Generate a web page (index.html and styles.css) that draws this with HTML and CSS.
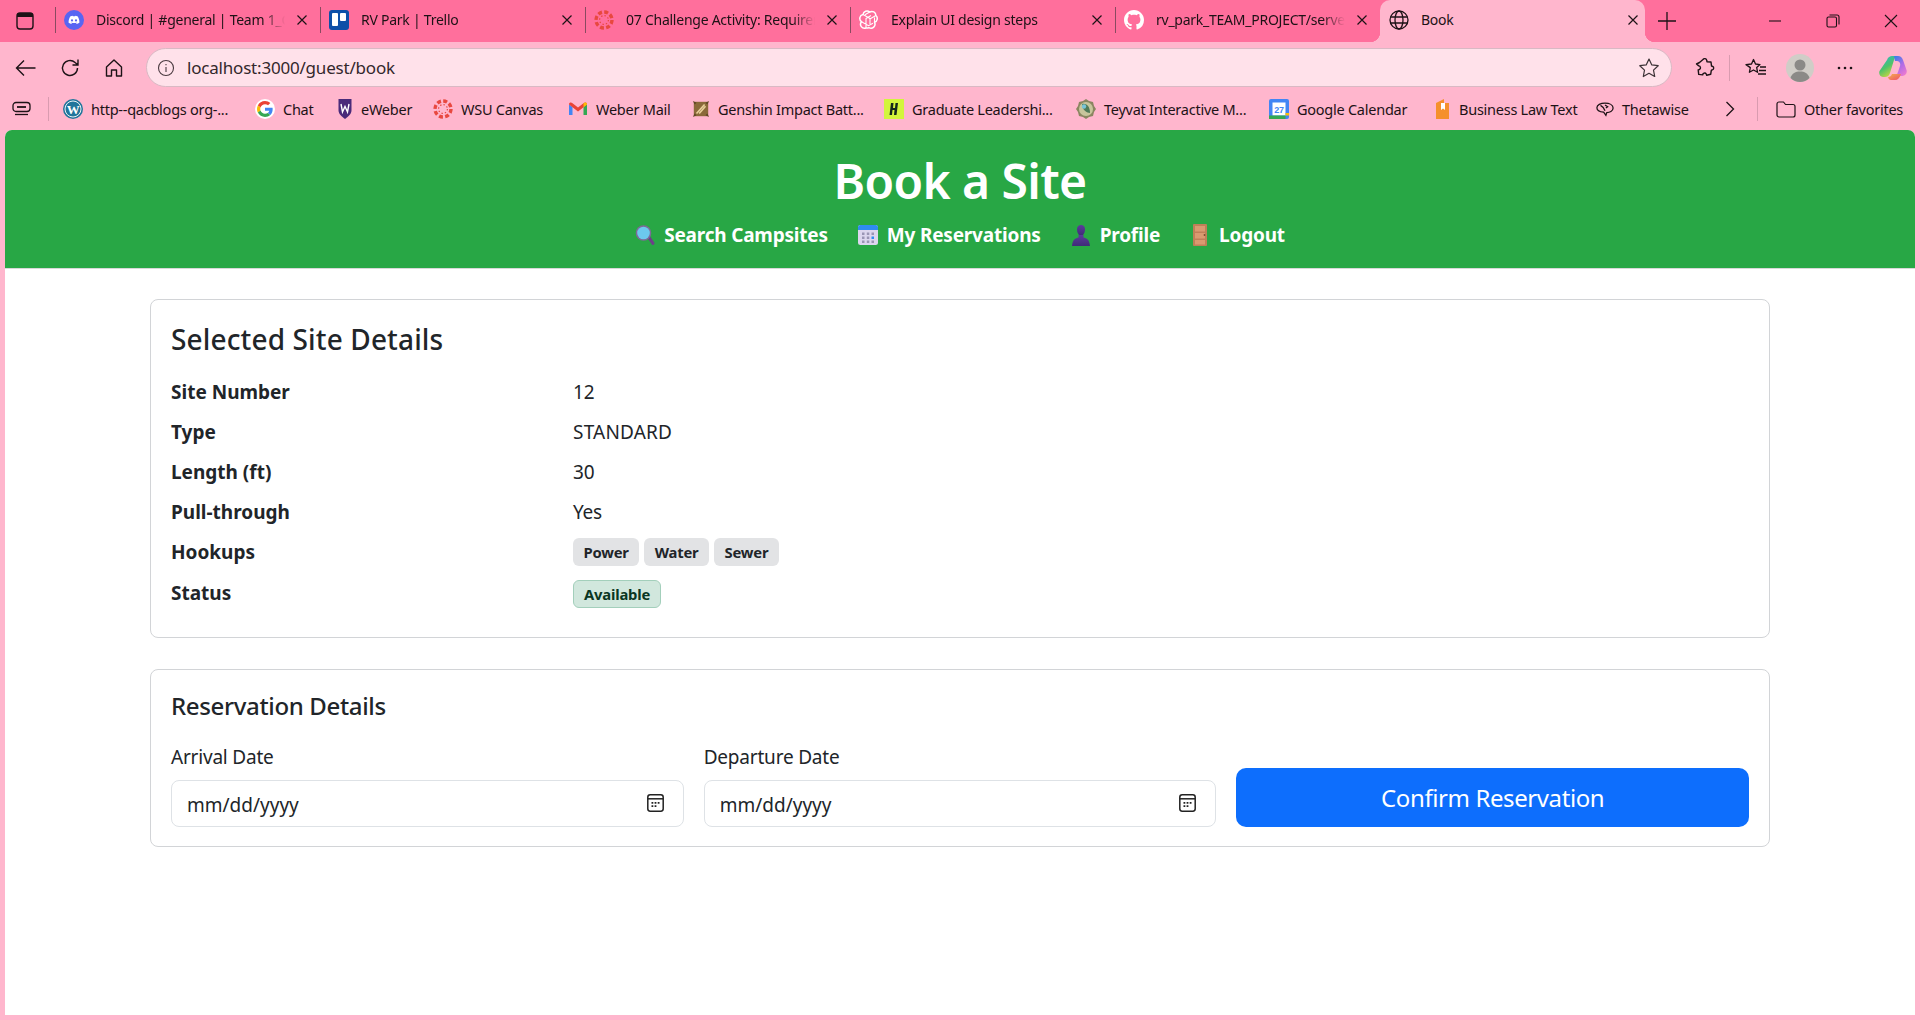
FILE: index.html
```html
<!DOCTYPE html>
<html lang="en">
<head>
<title>Book</title>
<link rel="stylesheet" href="styles.css">
</head>
<body>
<svg class="defs" width="0" height="0">
    <defs>
        <linearGradient id="cp-blue" x1="0" y1="0" x2="0.6" y2="1"><stop offset="0" stop-color="#27b5d8"/><stop offset="0.55" stop-color="#4fc26a"/><stop offset="1" stop-color="#d6d83a"/></linearGradient>
        <linearGradient id="cp-pink" x1="0.2" y1="0" x2="0.8" y2="1"><stop offset="0" stop-color="#3d7fe8"/><stop offset="0.5" stop-color="#b06ae6"/><stop offset="1" stop-color="#ee7ad0"/></linearGradient>
        <linearGradient id="cp-red" x1="0" y1="0" x2="1" y2="1"><stop offset="0" stop-color="#f4b04a"/><stop offset="1" stop-color="#ef4f6a"/></linearGradient>
        <linearGradient id="person" x1="0" y1="0" x2="0" y2="1"><stop offset="0" stop-color="#5c3a9c"/><stop offset="1" stop-color="#3f2c78"/></linearGradient>
    </defs>
    <symbol id="close" viewBox="0 0 12 12"><path d="M1.500 1.500l9 9M10.500 1.500l-9 9" stroke="#1d1216" stroke-width="1.200" fill="none"/></symbol>
    <symbol id="canvas" viewBox="0 0 20 20">
        <circle cx="10" cy="10" r="8" fill="none" stroke="#e8483f" stroke-width="3.400" stroke-dasharray="4 2.280"/>
        <circle cx="10" cy="10" r="4.400" fill="none" stroke="#e8483f" stroke-width="1.200" stroke-dasharray="1.400 2.050"/>
    </symbol>
    <symbol id="date" viewBox="0 0 17 18">
        <rect x="0.800" y="0.800" width="15.400" height="16.400" rx="2.400" fill="none" stroke="#222" stroke-width="1.500"/>
        <path d="M0.800 4.800h15.400" stroke="#222" stroke-width="1.500"/>
        <path d="M4.500 8h1.800v1.800H4.500zM7.600 8h1.800v1.800H7.600zM10.700 8h1.800v1.800h-1.800zM4.500 11.300h1.800v1.800H4.500zM7.600 11.300h1.800v1.800H7.600z" fill="#222"/>
    </symbol>
</svg>

<div class="tabstrip">
    <div class="tabstrip-side">
        <svg width="18" height="18" viewBox="0 0 18 18"><rect x="1" y="1" width="16" height="16" rx="3" fill="none" stroke="#1d1216" stroke-width="1.400"/><path d="M1 2.500a1.500 1.500 0 011.500-1.500h13a1.500 1.500 0 011.500 1.500V5H1z" fill="#1d1216"/></svg>
    </div>
    <div class="tab">
        <span class="tab-sep"></span>
        <svg class="tab-icon" viewBox="0 0 20 20"><circle cx="10" cy="10" r="10" fill="#5865f2"/><path d="M6.200 6.500c1-.5 1.900-.7 2.400-.8l.3.6h2.200l.3-.6c.5.100 1.400.3 2.400.8 1.100 1.900 1.700 3.900 1.600 6.300-1 .7-1.900 1.100-2.700 1.300l-.6-1 1-.5-.3-.2c-1.800.8-3.800.8-5.600 0l-.3.200 1 .5-.6 1c-.8-.2-1.700-.6-2.700-1.300-.1-2.400.5-4.400 1.600-6.300z" fill="#fff"/><circle cx="8" cy="10.400" r="1.100" fill="#5865f2"/><circle cx="12" cy="10.400" r="1.100" fill="#5865f2"/></svg>
        <span class="tab-title">Discord | #general | Team 1_Cascade</span>
        <svg class="tab-close"><use href="#close"/></svg>
    </div>
    <div class="tab">
        <span class="tab-sep"></span>
        <svg class="tab-icon" viewBox="0 0 20 20"><rect width="20" height="20" rx="3" fill="#0c4fa8"/><rect x="3" y="3" width="6" height="13" rx="1" fill="#fff"/><rect x="11" y="3" width="6" height="8" rx="1" fill="#fff"/></svg>
        <span class="tab-title">RV Park | Trello</span>
        <svg class="tab-close"><use href="#close"/></svg>
    </div>
    <div class="tab">
        <span class="tab-sep"></span>
        <svg class="tab-icon"><use href="#canvas"/></svg>
        <span class="tab-title">07 Challenge Activity: Requirements</span>
        <svg class="tab-close"><use href="#close"/></svg>
    </div>
    <div class="tab">
        <span class="tab-sep"></span>
        <svg class="tab-icon" viewBox="0 0 20 20" fill="none" stroke="#fff" stroke-width="1.500"><path d="M7 18a4 4 0 01-4.500-6.300A4 4 0 014 4.500a4 4 0 016.700-2.400 4 4 0 016.200 3.400 4 4 0 01-1.400 6.800 4 4 0 01-5.600 5.300A4 4 0 017 18z" stroke-linejoin="round"/><path d="M7 18V8.500l5-3M2.500 11.700l7 4 4.500-2.500M4 4.500l7 4v5.500M16.900 5.500l-6.500 3.800M15.500 12.300V7.500M10.700 2.100L6 4.800" stroke-width="1.100"/></svg>
        <span class="tab-title">Explain UI design steps</span>
        <svg class="tab-close"><use href="#close"/></svg>
    </div>
    <div class="tab">
        <span class="tab-sep"></span>
        <svg class="tab-icon" viewBox="0 0 16 16"><path fill="#fff" d="M8 0C3.58 0 0 3.58 0 8c0 3.54 2.290 6.530 5.470 7.590.4.070.55-.17.55-.38 0-.19-.01-.82-.01-1.490-2.010.37-2.530-.49-2.690-.94-.09-.23-.48-.94-.82-1.130-.28-.15-.68-.52-.01-.53.63-.01 1.080.58 1.230.82.72 1.210 1.870.87 2.330.66.07-.52.28-.87.51-1.070-1.780-.2-3.640-.89-3.640-3.950 0-.87.31-1.590.82-2.150-.08-.2-.36-1.020.08-2.120 0 0 .67-.21 2.200.82.64-.18 1.320-.27 2-.27s1.360.09 2 .27c1.530-1.040 2.200-.82 2.200-.82.44 1.100.16 1.920.08 2.120.51.56.82 1.270.82 2.150 0 3.070-1.870 3.750-3.650 3.950.29.25.54.73.54 1.480 0 1.070-.01 1.930-.01 2.200 0 .21.15.46.55.38A8.013 8.013 0 0016 8c0-4.420-3.580-8-8-8z"/></svg>
        <span class="tab-title">rv_park_TEAM_PROJECT/server</span>
        <svg class="tab-close"><use href="#close"/></svg>
    </div>
    <div class="tab tab-active">
        <svg class="tab-icon" viewBox="0 0 20 20" fill="none" stroke="#1d1216" stroke-width="1.300"><circle cx="10" cy="10" r="9"/><ellipse cx="10" cy="10" rx="4" ry="9"/><path d="M1.600 7h16.800M1.600 13h16.800"/></svg>
        <span class="tab-title">Book</span>
        <svg class="tab-close"><use href="#close"/></svg>
    </div>
    <div class="tab-new">
        <svg width="18" height="18" viewBox="0 0 18 18"><path d="M9 0v18M0 9h18" stroke="#1d1216" stroke-width="1.300"/></svg>
    </div>
    <div class="window-btns">
        <svg width="14" height="14" viewBox="0 0 14 14"><path d="M1 7h12" stroke="#1d1216" stroke-width="1.100"/></svg>
        <svg width="14" height="14" viewBox="0 0 14 14" fill="none" stroke="#1d1216" stroke-width="1.100"><rect x="1" y="3" width="9.500" height="10" rx="1.500"/><path d="M3.500 1h7.500a2 2 0 012 2v7.500"/></svg>
        <svg width="14" height="14" viewBox="0 0 14 14"><path d="M1 1l12 12M13 1L1 13" stroke="#1d1216" stroke-width="1.100"/></svg>
    </div>
</div>

<div class="toolbar">
    <div class="nav-btns">
        <svg width="21" height="20" viewBox="0 0 21 20" fill="none" stroke="#1d1216" stroke-width="1.400"><path d="M20.500 10H1.500M9 2.500L1.500 10 9 17.500"/></svg>
        <svg width="20" height="20" viewBox="0 0 20 20" fill="none" stroke="#1d1216" stroke-width="1.400"><path d="M17.500 10a7.500 7.500 0 11-2.400-5.500L18 7M18 1.500V7h-5.500"/></svg>
        <svg width="20" height="20" viewBox="0 0 20 20" fill="none" stroke="#1d1216" stroke-width="1.400"><path d="M2.500 9L10 2l7.500 7v9h-5v-6h-5v6h-5z" stroke-linejoin="round"/></svg>
    </div>
    <div class="address">
        <svg width="18" height="18" viewBox="0 0 18 18" fill="none" stroke="#4a3a40" stroke-width="1.100"><circle cx="9" cy="9" r="7.500"/><path d="M9 8v5M9 5v1.300"/></svg>
        <span class="address-url">localhost:3000/guest/book</span>
        <svg class="address-star" width="22" height="22" viewBox="0 0 22 22" fill="none" stroke="#3c3236" stroke-width="1.200"><path d="M11 2l2.800 5.900 6.400.8-4.700 4.400 1.200 6.400L11 16.300 5.300 19.500l1.200-6.400L1.800 8.700l6.400-.8z" stroke-linejoin="round"/></svg>
    </div>
    <div class="tool-btns">
        <svg class="tool-ext" width="20" height="22" viewBox="0 0 20 22" fill="none" stroke="#1d1216" stroke-width="1.400"><path d="M8 2.500c1-1.500 3.500-1 3.800 1 .1.5 0 1 .2 1.200l4 .3.5 4c.2.3.8.2 1.200.4 1.500.8 1.200 3-.4 3.500-.4.100-.8.100-1 .4l-.6 4-4 1c-.3-.4-.2-1-.5-1.400-1-1.500-3.500-.8-3.500 1l-4-.5-.5-4.500c.4-.3 1-.2 1.400-.5 1.500-1 1-3.300-.8-3.500L1.500 7l3-1.500z" stroke-linejoin="round"/></svg>
        <span class="tool-sep"></span>
        <svg class="tool-fav" width="22" height="22" viewBox="0 0 22 22" fill="none" stroke="#1d1216" stroke-width="1.300"><path d="M8.500 2.500l2 4.500 4.500.6-3.300 3 .9 4.700-4.100-2.300-4.100 2.300.9-4.700L1 7.600l5.500-.6z" stroke-linejoin="round"/><path d="M15 10h6M14 13.500h7M13 17h8"/></svg>
        <svg class="tool-avatar" width="28" height="28" viewBox="0 0 28 28"><circle cx="14" cy="14" r="14" fill="#d0cdc7"/><circle cx="14" cy="11" r="5.500" fill="#8b8a87"/><path d="M4.500 24c1.500-5 5-6.500 9.500-6.500s8 1.500 9.500 6.500c-2.500 2.500-6 4-9.500 4s-7-1.500-9.500-4z" fill="#8b8a87"/></svg>
        <svg class="tool-more" width="16" height="4" viewBox="0 0 16 4" fill="#1d1216"><circle cx="2" cy="2" r="1.300"/><circle cx="8" cy="2" r="1.300"/><circle cx="14" cy="2" r="1.300"/></svg>
        <svg class="tool-copilot" width="28" height="26" viewBox="0 0 28 26">
            <path d="M8 5c1-3 3-4 5-4h6c-2 0-3 1-4 4l-4 13c-1 3-3 4-5 4H4c-3 0-4.500-3-3.500-6z" fill="url(#cp-blue)"/>
            <path d="M15 1h4c2.500 0 4 1.500 5 4l3.500 10c1 3-1 6-4 6h-9c2 0 3.500-1 4.500-4l2-6c1-3-1-5-3-5h-2z" fill="url(#cp-pink)"/>
            <path d="M9 22c2 0 3.500-1 4-3h9c-1.500 4-3 6-6 6h-4c-1.500 0-2.500-1-3-3z" fill="url(#cp-red)"/>
        </svg>
    </div>
</div>

<div class="favbar">
    <svg class="fav-tabs" width="20" height="18" viewBox="0 0 20 18" fill="none" stroke="#1d1216" stroke-width="1.300"><rect x="1" y="2.500" width="17" height="9" rx="3"/><path d="M5 7h9" stroke-width="1.800"/><path d="M3 14.500h13"/></svg>
    <span class="fav-sep"></span>
    <div class="fav-list">
        <div class="fav fav-wp">
            <svg class="fav-icon" viewBox="0 0 20 20"><circle cx="10" cy="10" r="10" fill="#21759b"/><circle cx="10" cy="10" r="8" fill="none" stroke="#fff" stroke-width="0.900"/><text x="10" y="14.500" class="fav-wp-w">W</text></svg>
            <span>http--qacblogs org-...</span>
        </div>
        <div class="fav fav-chat">
            <svg class="fav-icon" viewBox="-6 -6 60 60"><circle cx="24" cy="24" r="30" fill="#fff"/><path fill="#EA4335" d="M24 9.500c3.540 0 6.710 1.220 9.210 3.600l6.850-6.850C35.900 2.380 30.470 0 24 0 14.620 0 6.510 5.380 2.560 13.220l7.980 6.190C12.430 13.720 17.740 9.500 24 9.500z"/><path fill="#4285F4" d="M46.980 24.550c0-1.570-.15-3.090-.38-4.550H24v9.020h12.940c-.58 2.960-2.260 5.480-4.780 7.180l7.730 6c4.510-4.180 7.090-10.360 7.090-17.650z"/><path fill="#FBBC05" d="M10.530 28.590c-.48-1.450-.76-2.990-.76-4.590s.27-3.140.76-4.590l-7.980-6.190C.92 16.460 0 20.120 0 24c0 3.880.92 7.540 2.560 10.780l7.970-6.190z"/><path fill="#34A853" d="M24 48c6.480 0 11.930-2.130 15.890-5.810l-7.730-6c-2.150 1.450-4.920 2.300-8.160 2.300-6.260 0-11.570-4.220-13.470-9.910l-7.980 6.190C6.510 42.620 14.620 48 24 48z"/></svg>
            <span>Chat</span>
        </div>
        <div class="fav fav-weber">
            <svg class="fav-icon" viewBox="3 0 14 20"><path d="M3.500 0h13v11c0 4-3 6.500-6.500 9-3.500-2.500-6.500-5-6.500-9z" fill="#4a2a7a"/><path d="M6 5l1.500 8L10 7.500 12.500 13 14 5" fill="none" stroke="#fff" stroke-width="1.400"/></svg>
            <span>eWeber</span>
        </div>
        <div class="fav fav-wsu">
            <svg class="fav-icon"><use href="#canvas"/></svg>
            <span>WSU Canvas</span>
        </div>
        <div class="fav fav-mail">
            <svg class="fav-icon" viewBox="0 0 20 20"><path d="M1 5.500V16h3.500V8z" fill="#4285f4"/><path d="M15.500 8v8H19V5.500z" fill="#34a853"/><path d="M1 5.500C1 3.500 3 3 4.500 4.200L10 8.500l5.500-4.300C17 3 19 3.500 19 5.500l-3.500 2.800L10 12.500 4.500 8.300z" fill="#ea4335"/><path d="M15.500 4.200C17 3 19 3.500 19 5.500l-3.500 2.800z" fill="#fbbc05"/></svg>
            <span>Weber Mail</span>
        </div>
        <div class="fav fav-gi">
            <svg class="fav-icon" viewBox="0 0 20 20"><rect x="2" y="2" width="16" height="16" fill="#8a6a3a"/><path d="M1 1l4 2-2 2zM19 1l-4 2 2 2zM1 19l4-2-2-2zM19 19l-4-2 2-2z" fill="#5d4524"/><path d="M5 15L14 5M8 15l7-8" stroke="#e8cf9a" stroke-width="1.800"/></svg>
            <span>Genshin Impact Batt...</span>
        </div>
        <div class="fav fav-grad">
            <svg class="fav-icon" viewBox="0 0 20 20"><rect width="20" height="20" fill="#d3f53c"/><path d="M7 4h2.500L9 9h2l.5-5H14l-1.500 12H10l.5-5h-2L8 16H5.500z" fill="#14281c"/></svg>
            <span>Graduate Leadershi...</span>
        </div>
        <div class="fav fav-map">
            <svg class="fav-icon" viewBox="0 0 20 20"><path d="M10 0l3 2 4 1 1 4 2 3-2 3-1 4-4 1-3 2-3-2-4-1-1-4-2-3 2-3 1-4 4-1z" fill="#8a8560"/><circle cx="10" cy="10" r="7" fill="#c8c59c"/><path d="M6 5c4-1 8 2 8 9-3 0-8-3-8-9z" fill="#4f7a58"/><circle cx="8" cy="7.500" r="2.200" fill="#79c4d8"/></svg>
            <span>Teyvat Interactive M...</span>
        </div>
        <div class="fav fav-cal">
            <svg class="fav-icon" viewBox="0 0 20 20"><rect width="20" height="20" rx="2" fill="#4285f4"/><rect x="3.500" y="3.500" width="13" height="13" fill="#fff"/><rect y="16.500" width="16.500" height="3.500" fill="#34a853"/><path d="M16.500 16.500H20V14h-3.500z" fill="#fbbc05"/><text x="10" y="14.200" class="fav-cal-n">27</text></svg>
            <span>Google Calendar</span>
        </div>
        <div class="fav fav-law">
            <svg class="fav-icon" viewBox="2 0 15 20"><path d="M3 4l8-4v4h5v16H3z" fill="#f5902c"/><path d="M8 4h4v7l-2-1.500L8 11z" fill="#fff"/></svg>
            <span>Business Law Text</span>
        </div>
        <div class="fav fav-theta">
            <svg class="fav-icon" viewBox="0 0 20 20" fill="none" stroke="#1d1216" stroke-width="1.400"><path d="M10 3.500c5 0 9 2 9 5.500s-4 5-7 5l-1 3-2.500-3.500C4 13 1 11.500 1 8.500c0-3 4-5 9-5z"/><path d="M5 6c2 1 4 3 5 6M10 5.500l3 2-2 1.500"/></svg>
            <span>Thetawise</span>
        </div>
    </div>
    <svg class="fav-more" width="10" height="16" viewBox="0 0 10 16" fill="none" stroke="#1d1216" stroke-width="1.300"><path d="M1.500 1l7 7-7 7"/></svg>
    <span class="fav-sep fav-sep-end"></span>
    <div class="fav fav-other">
        <svg class="fav-icon" viewBox="0 0 20 20" fill="none" stroke="#1d1216" stroke-width="1.200"><path d="M1 5a2 2 0 012-2h4.500l2 2.500H17a2 2 0 012 2V16a2 2 0 01-2 2H3a2 2 0 01-2-2z" stroke-linejoin="round"/></svg>
        <span>Other favorites</span>
    </div>
</div>

<div class="page">
    <header class="hero">
        <h1>Book a Site</h1>
        <nav class="hero-nav">
            <a href="#">
                <svg class="emoji" viewBox="0 0 20 22"><path d="M12.500 14l2.300-2 4.500 6.500c.8 1.400-1 3-2.300 2.200z" fill="#6d3f8a"/><circle cx="8.500" cy="9" r="7.800" fill="#7d6a98"/><circle cx="8.500" cy="9" r="6.300" fill="#6cc9ee"/></svg>
                Search Campsites
            </a>
            <a href="#">
                <svg class="emoji" viewBox="0 0 20 22"><rect y="1" width="20" height="20" rx="2.500" fill="#dcd6ee"/><path d="M0 6V3.500A2.500 2.500 0 012.500 1h15A2.500 2.500 0 0120 3.500V6z" fill="#2f8cf0"/><path d="M4 8.500h2.500V11H4zM8.800 8.500h2.500V11H8.800zM13.500 8.500H16V11h-2.500zM4 12.500h2.500V15H4zM8.800 12.500h2.500V15H8.800zM4 16.500h2.500V19H4zM8.800 16.500h2.500V19H8.800zM13.500 16.500H16V19h-2.500z" fill="#9a95b4"/><path d="M13.500 12.500H16V15h-2.500z" fill="#2f8cf0"/></svg>
                My Reservations
            </a>
            <a href="#">
                <svg class="emoji" viewBox="0 0 20 22"><path d="M6 5.500C6 2.500 7.500 1 10 1s4 1.500 4 4.500-1.500 6-4 6-4-3-4-6z" fill="url(#person)"/><path d="M7.500 11h5v2.500c3 .5 6 2 6.500 8.500H1c.5-6.500 3.500-8 6.500-8.500z" fill="url(#person)"/></svg>
                Profile
            </a>
            <a href="#">
                <svg class="emoji" viewBox="0 0 20 22"><rect x="3" y="0" width="14" height="22" rx="1" fill="#c07f58"/><path d="M5 2h10v5.500H5zM5 9h10v5.500H5zM5 16h10v4.500H5z" fill="#d99a70"/><circle cx="14.500" cy="11" r="0.900" fill="#7a4a2c"/></svg>
                Logout
            </a>
        </nav>
    </header>

    <main class="content">
        <section class="card card-site">
            <h2>Selected Site Details</h2>
            <div class="detail-row"><span class="detail-label">Site Number</span><span>12</span></div>
            <div class="detail-row"><span class="detail-label">Type</span><span class="detail-caps">STANDARD</span></div>
            <div class="detail-row"><span class="detail-label">Length (ft)</span><span>30</span></div>
            <div class="detail-row"><span class="detail-label">Pull-through</span><span>Yes</span></div>
            <div class="detail-row">
                <span class="detail-label">Hookups</span>
                <span class="badges">
                    <span class="badge">Power</span>
                    <span class="badge">Water</span>
                    <span class="badge">Sewer</span>
                </span>
            </div>
            <div class="detail-row">
                <span class="detail-label">Status</span>
                <span class="badges"><span class="badge badge-ok">Available</span></span>
            </div>
        </section>

        <section class="card card-form">
            <h3>Reservation Details</h3>
            <form class="form-row">
                <div class="field">
                    <label>Arrival Date</label>
                    <div class="date-input">
                        <span>mm/dd/yyyy</span>
                        <svg width="17" height="18"><use href="#date"/></svg>
                    </div>
                </div>
                <div class="field">
                    <label>Departure Date</label>
                    <div class="date-input">
                        <span>mm/dd/yyyy</span>
                        <svg width="17" height="18"><use href="#date"/></svg>
                    </div>
                </div>
                <button class="confirm" type="button">Confirm Reservation</button>
            </form>
        </section>
    </main>
</div>
</body>
</html>
```

FILE: styles.css
```css
html {
    overflow: hidden;
}

body {
    margin: 0;
    width: 1920px;
    height: 1020px;
    overflow: hidden;
    background: #ffb6cd;
    color: #212529;
    font-family: "Noto Sans", "Open Sans", sans-serif;
    font-size: 19px;
    letter-spacing: -0.2px;
}

.defs {
    display: block;
    height: 0;
}

svg {
    flex: none;
    display: block;
}

/* browser tabs */
.tabstrip {
    display: flex;
    height: 42px;
    background: #ff6f9c;
    color: #1d1216;
    font-size: 14px;
    letter-spacing: -0.25px;
}

.tabstrip-side {
    width: 55px;
    padding-left: 16px;
    display: flex;
    align-items: center;
    box-sizing: border-box;
}

.tab {
    width: 265px;
    display: flex;
    align-items: center;
    box-sizing: border-box;
    padding-bottom: 2px;
}

.tab-sep {
    width: 1px;
    height: 26px;
    margin-right: 8px;
    background: #8a4a60;
    flex: none;
}

.tab-icon {
    width: 20px;
    height: 20px;
}

.tab-title {
    width: 189px;
    margin: 0 0 2px 12px;
    white-space: nowrap;
    overflow: hidden;
    -webkit-mask-image: linear-gradient(to right, #000 88%, transparent);
    mask-image: linear-gradient(to right, #000 88%, transparent);
}

.tab-close {
    width: 12px;
    height: 12px;
    margin-left: 11px;
}

.tab-active {
    padding-left: 9px;
    background: #ffb6cd;
    border-radius: 10px 10px 0 0;
    position: relative;
}

/* little flared corners at the foot of the open tab */
.tab-active::before,
.tab-active::after {
    content: "";
    position: absolute;
    bottom: 0;
    width: 10px;
    height: 10px;
}

.tab-active::before {
    left: -10px;
    background: radial-gradient(circle at 0 0, transparent 10px, #ffb6cd 10.5px);
}

.tab-active::after {
    right: -10px;
    background: radial-gradient(circle at 100% 0, transparent 10px, #ffb6cd 10.5px);
}

.tab-active .tab-title {
    width: 195px;
    -webkit-mask-image: none;
    mask-image: none;
}

.tab-new {
    width: 60px;
    padding-left: 13px;
    box-sizing: border-box;
    display: flex;
    align-items: center;
}

.window-btns {
    margin-left: auto;
    display: flex;
    align-items: center;
    gap: 44px;
    padding-right: 22px;
}

/* address bar row */
.toolbar {
    height: 46px;
    box-sizing: border-box;
    display: flex;
    align-items: center;
    padding: 5px 0 0 15px;
}

.nav-btns {
    display: flex;
    gap: 24px;
    width: 131px;
}

.address {
    width: 1526px;
    height: 39px;
    box-sizing: border-box;
    display: flex;
    align-items: center;
    padding: 0 11px 0 10px;
    background: #ffe1ea;
    border: 1px solid #d9b9c4;
    border-radius: 20px;
    font-size: 17px;
    color: #33282c;
}

.address-url {
    margin-left: 12px;
}

.address-star {
    margin-left: auto;
}

.tool-btns {
    display: flex;
    align-items: center;
    padding-left: 23px;
}

.tool-sep {
    width: 1px;
    height: 26px;
    background: #d99bb0;
    margin: 0 15px 0 14px;
}

.tool-avatar {
    margin-left: 19px;
}

.tool-more {
    margin-left: 23px;
}

.tool-copilot {
    margin-left: 26px;
}

/* favorites row */
.favbar {
    height: 42px;
    display: flex;
    align-items: center;
    padding-left: 12px;
    font-size: 14.5px;
    letter-spacing: -0.25px;
    color: #1d1216;
}

.fav-sep {
    width: 1px;
    height: 24px;
    background: #d99bb0;
    margin: 0 14px 0 16px;
    flex: none;
}

.fav-list {
    width: 1650px;
    display: flex;
    align-items: center;
    white-space: nowrap;
}

.fav {
    display: flex;
    align-items: center;
    gap: 8px;
    white-space: nowrap;
    flex: none;
}

.fav-wp,
.fav-gi,
.fav-grad {
    width: 192px;
}

.fav-chat {
    width: 82px;
}

.fav-weber {
    width: 96px;
}

.fav-wsu {
    width: 135px;
}

.fav-mail {
    width: 124px;
}

.fav-map {
    width: 193px;
}

.fav-cal {
    width: 165px;
}

.fav-law {
    width: 162px;
}

.fav-icon {
    width: 20px;
    height: 20px;
}

.fav-weber .fav-icon {
    width: 16px;
}

.fav-law .fav-icon {
    width: 17px;
}

.fav-theta .fav-icon,
.fav-gi .fav-icon {
    width: 18px;
}

.fav-wp-w {
    font: bold 13px "Liberation Serif", serif;
    fill: #fff;
    text-anchor: middle;
}

.fav-cal-n {
    font: bold 9px "Liberation Sans", sans-serif;
    fill: #4285f4;
    text-anchor: middle;
}

.fav-more {
    margin-left: 12px;
}

.fav-sep-end {
    margin: 0 18px 0 22px;
}

/* page */
.page {
    margin: 0 5px;
    height: 885px;
    background: #fff;
    border-radius: 7px 7px 0 0;
    overflow: hidden;
}

.hero {
    height: 139px;
    box-sizing: border-box;
    background: #28a745;
    color: #fff;
    text-align: center;
    padding-top: 16px;
    border-bottom: 1px solid #d8d8d8;
}

.hero h1 {
    margin: 0;
    font-size: 48px;
    font-weight: 600;
    line-height: 70px;
    letter-spacing: -0.6px;
}

.hero-nav {
    display: flex;
    justify-content: center;
    gap: 30px;
    margin-top: 6px;
    letter-spacing: -0.2px;
}

.hero-nav a {
    display: flex;
    align-items: center;
    gap: 9px;
    color: #fff;
    font-weight: 700;
    text-decoration: none;
}

.emoji {
    width: 20px;
    height: 22px;
}

.content {
    padding: 30px 145px 0;
}

.card {
    border: 1px solid #d2d4d7;
    border-radius: 8px;
    padding: 0 20px;
}

.card-site {
    height: 339px;
    box-sizing: border-box;
    margin-bottom: 31px;
}

.card-site h2 {
    margin: 19px 0 13px;
    font-size: 28px;
    font-weight: 550;
    line-height: 40px;
    letter-spacing: 0.14px;
}

.detail-row {
    display: flex;
    align-items: center;
    height: 40.1px;
}

.detail-label {
    width: 402px;
    font-weight: 700;
    letter-spacing: 0;
}

.detail-caps {
    letter-spacing: 0.2px;
}

.badges {
    display: flex;
    gap: 5px;
}

.badge {
    padding: 5px 10.5px;
    background: #e2e3e5;
    border-radius: 6px;
    font-size: 14.8px;
    font-weight: 700;
    line-height: 18px;
}

.badge-ok {
    background: #d1e7dd;
    border: 1px solid #a3cfbb;
    color: #0a3622;
    padding: 4px 10px;
    margin-top: 2px;
}

.card-form {
    height: 178px;
    box-sizing: border-box;
}

.card-form h3 {
    margin: 20px 0 20px;
    font-size: 24px;
    font-weight: 550;
    line-height: 32px;
    letter-spacing: -0.35px;
}

.form-row {
    display: flex;
    align-items: flex-end;
    gap: 20px;
}

.field {
    flex: 1;
}

.field label {
    display: block;
    margin-bottom: 8px;
    line-height: 30px;
}

.date-input {
    height: 47px;
    box-sizing: border-box;
    display: flex;
    align-items: center;
    justify-content: space-between;
    padding: 2px 19px 0 15px;
    border: 1px solid #dee2e6;
    border-radius: 8px;
    letter-spacing: 0;
}

.date-input svg {
    margin-top: -3px;
}

.confirm {
    flex: 1;
    height: 59px;
    padding: 0;
    border: none;
    border-radius: 10px;
    background: #0d6efd;
    color: #fff;
    font-family: inherit;
    font-size: 24px;
    letter-spacing: -0.4px;
}
```
